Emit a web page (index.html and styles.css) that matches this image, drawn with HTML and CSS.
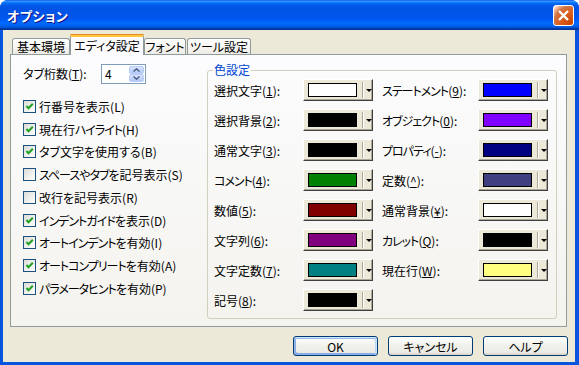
FILE: index.html
```html
<!DOCTYPE html>
<html lang="ja">
<head>
  <meta charset="UTF-8" />
  <title>オプション</title>
  <link rel="stylesheet" href="styles.css">
</head>
<body>

  <div class="window">
    <div class="titlebar">
      <span class="title">オプション</span>
      <button class="close-btn">
        <svg viewBox="0 0 19 19"><path d="M5 5l9 9M14 5l-9 9"/></svg>
      </button>
    </div>

    <div class="client">
      <div class="tabs">
        <div class="tab tab-basic">基本環境</div>
        <div class="tab tab-editor active">エディタ設定</div>
        <div class="tab tab-font">フォント</div>
        <div class="tab tab-tool">ツール設定</div>
      </div>

      <div class="tab-page">
        <div class="left-col">
          <div class="spin-row">
            <label class="spin-label">タブ桁数(<u>T</u>):</label>
            <div class="spinner">
              <span class="spin-value">4</span>
              <div class="spin-btns">
                <span class="spin-btn"><svg viewBox="0 0 7 4"><path d="M0.5 3.5L3.5 0.8L6.5 3.5"/></svg></span>
                <span class="spin-btn"><svg viewBox="0 0 7 4"><path d="M0.5 0.5L3.5 3.2L6.5 0.5"/></svg></span>
              </div>
            </div>
          </div>

          <!-- チェック項目 -->
          <ul class="checks">
            <li><span class="cb"><svg viewBox="0 0 11 11"><path d="M2.5 5l2 2.3L8.8 2.8"/></svg></span>行番号を表示(L)</li>
            <li><span class="cb"><svg viewBox="0 0 11 11"><path d="M2.5 5l2 2.3L8.8 2.8"/></svg></span>現在行<span class="kana">ハイライト</span>(H)</li>
            <li><span class="cb"><svg viewBox="0 0 11 11"><path d="M2.5 5l2 2.3L8.8 2.8"/></svg></span>タブ文字を使用する(B)</li>
            <li><span class="cb"></span><span class="kana">スペースやタブ</span>を記号表示(S)</li>
            <li><span class="cb"></span>改行を記号表示(R)</li>
            <li><span class="cb"><svg viewBox="0 0 11 11"><path d="M2.5 5l2 2.3L8.8 2.8"/></svg></span><span class="kana">インデントガイド</span>を表示(D)</li>
            <li><span class="cb"><svg viewBox="0 0 11 11"><path d="M2.5 5l2 2.3L8.8 2.8"/></svg></span><span class="kana">オートインデント</span>を有効(I)</li>
            <li><span class="cb"><svg viewBox="0 0 11 11"><path d="M2.5 5l2 2.3L8.8 2.8"/></svg></span><span class="kana">オートコンプリート</span>を有効(A)</li>
            <li><span class="cb"><svg viewBox="0 0 11 11"><path d="M2.5 5l2 2.3L8.8 2.8"/></svg></span><span class="kana">パラメータヒント</span>を有効(P)</li>
          </ul>
        </div>

        <fieldset class="colors">
          <legend>色設定</legend>
          <div class="color-grid">
            <span class="c-label">選択文字(<u>1</u>):</span>
            <div class="combo"><span class="swatch sw-white"></span><span class="sep"></span><span class="arrow"></span></div>
            <span class="c-label"><span class="kana">ステートメント</span>(<u>9</u>):</span>
            <div class="combo"><span class="swatch sw-blue"></span><span class="sep"></span><span class="arrow"></span></div>

            <span class="c-label">選択背景(<u>2</u>):</span>
            <div class="combo"><span class="swatch sw-black"></span><span class="sep"></span><span class="arrow"></span></div>
            <span class="c-label"><span class="kana">オブジェクト</span>(<u>0</u>):</span>
            <div class="combo"><span class="swatch sw-violet"></span><span class="sep"></span><span class="arrow"></span></div>

            <span class="c-label">通常文字(<u>3</u>):</span>
            <div class="combo"><span class="swatch sw-black"></span><span class="sep"></span><span class="arrow"></span></div>
            <span class="c-label"><span class="kana">プロパティ</span>(<u>-</u>):</span>
            <div class="combo"><span class="swatch sw-navy"></span><span class="sep"></span><span class="arrow"></span></div>

            <span class="c-label"><span class="kana">コメント</span>(<u>4</u>):</span>
            <div class="combo"><span class="swatch sw-green"></span><span class="sep"></span><span class="arrow"></span></div>
            <span class="c-label">定数(<u>^</u>):</span>
            <div class="combo"><span class="swatch sw-slate"></span><span class="sep"></span><span class="arrow"></span></div>

            <span class="c-label">数値(<u>5</u>):</span>
            <div class="combo"><span class="swatch sw-maroon"></span><span class="sep"></span><span class="arrow"></span></div>
            <span class="c-label">通常背景(<u>¥</u>):</span>
            <div class="combo"><span class="swatch sw-white"></span><span class="sep"></span><span class="arrow"></span></div>

            <span class="c-label">文字列(<u>6</u>):</span>
            <div class="combo"><span class="swatch sw-purple"></span><span class="sep"></span><span class="arrow"></span></div>
            <span class="c-label"><span class="kana">カレット</span>(<u>Q</u>):</span>
            <div class="combo"><span class="swatch sw-black"></span><span class="sep"></span><span class="arrow"></span></div>

            <span class="c-label">文字定数(<u>7</u>):</span>
            <div class="combo"><span class="swatch sw-teal"></span><span class="sep"></span><span class="arrow"></span></div>
            <span class="c-label">現在行(<u>W</u>):</span>
            <div class="combo"><span class="swatch sw-yellow"></span><span class="sep"></span><span class="arrow"></span></div>

            <span class="c-label">記号(<u>8</u>):</span>
            <div class="combo"><span class="swatch sw-black"></span><span class="sep"></span><span class="arrow"></span></div>
          </div>
        </fieldset>
      </div>

      <div class="buttons">
        <button class="btn default">OK</button>
        <button class="btn">キャンセル</button>
        <button class="btn">ヘルプ</button>
      </div>
    </div>
  </div>

</body>
</html>
```

FILE: styles.css
```css
* {
  box-sizing: border-box;
}

body {
  margin: 0;
  background: #fff;
  font-family: "Noto Sans CJK JP", sans-serif;
  font-size: 12px;
  color: #000;
  font-feature-settings: "palt";
}

.window {
  width: 579px;
  height: 365px;
  display: flex;
  flex-direction: column;
  border-radius: 8px 8px 0 0;
  overflow: hidden;
  background: #0855dd;
}

/* タイトルバー */
.titlebar {
  height: 30px;
  flex-shrink: 0;
  display: flex;
  align-items: center;
  justify-content: space-between;
  padding: 0 5px 0 7px;
  background: linear-gradient(180deg, #0058ee 0%, #3a93ff 4%, #288eff 6%, #127dff 8%, #036ffc 10%, #0262ee 14%, #0057e5 20%, #0054e3 24%, #0055eb 56%, #005bf5 66%, #026afe 76%, #0062ef 86%, #0052d6 92%, #0040ab 94%, #003092 100%);
}

.title {
  color: #fff;
  font-weight: bold;
  font-size: 13px;
  letter-spacing: 0.5px;
  text-shadow: 1px 1px #0f1089;
}

.close-btn {
  width: 21px;
  height: 21px;
  padding: 0;
  border: 1px solid #fff;
  border-radius: 3px;
  background: radial-gradient(circle at 90% 90%, #cc4600 0, #dc6527 55%, #cd7546 70%, #ffccb2 90%, #fff 100%);
  display: flex;
  align-items: center;
  justify-content: center;
}

.close-btn svg {
  width: 19px;
  height: 19px;
  fill: none;
  stroke: #fff;
  stroke-width: 2.4;
}

.client {
  flex: 1;
  margin: 0 4px 3px 3px;
  padding: 4px 8px 0 7px;
  background: #ece9d8;
  display: flex;
  flex-direction: column;
}

/* タブ */
.tabs {
  display: flex;
  align-items: flex-end;
  padding-left: 2px;
  margin-bottom: -1px;
  height: 21px;
  position: relative;
  z-index: 1;
}

.tab {
  height: 16px;
  margin-bottom: 1px;
  border: 1px solid #919b9c;
  border-bottom: none;
  border-radius: 3px 3px 0 0;
  background: linear-gradient(180deg, #fff 0%, #f5f4f0 60%, #ecebe5 100%);
  display: flex;
  align-items: center;
  justify-content: center;
  line-height: 14px;
  white-space: nowrap;
}

.tab.active {
  height: 21px;
  margin-bottom: 0;
  border-top: 3px solid #ffc83c;
  background: #fcfcfe;
  padding-bottom: 1px;
  position: relative;
}

.tab.active::before {
  content: "";
  display: block;
  position: absolute;
  left: -1px;
  right: -1px;
  top: -3px;
  height: 1px;
  background: #e68b2c;
  border-radius: 3px 3px 0 0;
}

.tab-basic { width: 58px; }
.tab-editor { width: 74px; }
.tab-font { width: 42px; }
.tab-tool { width: 64px; margin-left: 1px; }

/* 半角寄りのカナ幅に詰める */
.kana {
  letter-spacing: -1px;
}

/* タブページ */
.tab-page {
  height: 273px;
  border: 1px solid #919b9c;
  background: linear-gradient(180deg, #fcfcfe 0%, #f4f3ee 100%);
  display: flex;
  padding: 8px 0 0 12px;
}

.left-col {
  width: 184px;
}

.spin-row {
  height: 21px;
  display: flex;
  align-items: center;
}

.spin-label {
  width: 78px;
}

.spinner {
  width: 45px;
  height: 20px;
  border: 1px solid #7f9db9;
  background: #fff;
  display: flex;
  justify-content: space-between;
  padding: 1px 1px 1px 3px;
}

.spin-value {
  line-height: 16px;
}

.spin-btns {
  width: 15px;
  display: flex;
  flex-direction: column;
}

.spin-btn {
  flex: 1;
  border: 1px solid #b9ccf8;
  border-radius: 2px;
  background: linear-gradient(180deg, #d8e4fd 0%, #c1d3fb 60%, #b4c8f6 100%);
  display: flex;
  align-items: center;
  justify-content: center;
}

.spin-btn svg {
  width: 7px;
  height: 4px;
  fill: none;
  stroke: #4d6185;
  stroke-width: 1.5;
}

.checks {
  list-style: none;
  margin: 11px 0 0;
  padding: 0;
}

.checks li {
  height: 22.75px;
  display: flex;
  align-items: center;
  white-space: nowrap;
}

.cb {
  width: 13px;
  height: 13px;
  margin-right: 3px;
  border: 1px solid #1c5180;
  background: linear-gradient(135deg, #dcdcd7 0%, #fff 100%);
  flex-shrink: 0;
  display: flex;
}

.cb svg {
  width: 11px;
  height: 11px;
  fill: none;
  stroke: #21a121;
  stroke-width: 2;
}

/* 色設定 */
.colors {
  width: 350px;
  height: 256px;
  margin: 0;
  padding: 2px 8px 7px 6px;
  border: 1px solid #d0d0bf;
  border-radius: 3px;
}

.colors legend {
  padding: 0 1px;
  margin-left: -1px;
  color: #0046d5;
  line-height: 14px;
}

.color-grid {
  display: grid;
  grid-template-columns: 89px 79px 96px 70px;
  grid-auto-rows: 22px;
  row-gap: 8px;
  align-items: center;
}

.c-label {
  white-space: nowrap;
}

.combo {
  width: 70px;
  height: 22px;
  border: 1px solid;
  border-color: #fff #404040 #404040 #fff;
  box-shadow: inset -1px -1px #aca899;
  background: #ece9d8;
  display: flex;
  align-items: center;
  padding-left: 4px;
}

.swatch {
  width: 50px;
  height: 14px;
  border: 1px solid #000;
}

.sep {
  width: 2px;
  height: 16px;
  margin-left: 5px;
  border-left: 1px solid #aca899;
  border-right: 1px solid #fff;
}

.arrow {
  margin-left: 2px;
  width: 0;
  height: 0;
  border-left: 3px solid transparent;
  border-right: 3px solid transparent;
  border-top: 3px solid #000;
}

.sw-white { background: #fff; }
.sw-black { background: #000; }
.sw-green { background: #008000; }
.sw-maroon { background: #800000; }
.sw-purple { background: #800080; }
.sw-teal { background: #008080; }
.sw-blue { background: #0000ff; }
.sw-violet { background: #8000ff; }
.sw-navy { background: #000080; }
.sw-slate { background: #404080; }
.sw-yellow { background: #ffff80; }

/* ボタン */
.buttons {
  display: flex;
  justify-content: flex-end;
  gap: 10px;
  margin-top: 9px;
  margin-right: -1px;
}

.btn {
  width: 85px;
  height: 20px;
  padding: 0;
  font-family: inherit;
  font-size: 12px;
  font-feature-settings: "palt";
  color: #000;
  border: 1px solid #003c74;
  border-radius: 3px;
  background: linear-gradient(180deg, #fff 0%, #f0f0ea 50%, #ecebe6 85%, #d6d0c5 100%);
}

.btn.default {
  box-shadow: inset -1px 1px #cee7ff, inset 1px 2px #98b8ea, inset -2px 2px #bcd4f6, inset 1px -1px #89ade4, inset 2px -2px #89ade4;
}
```
